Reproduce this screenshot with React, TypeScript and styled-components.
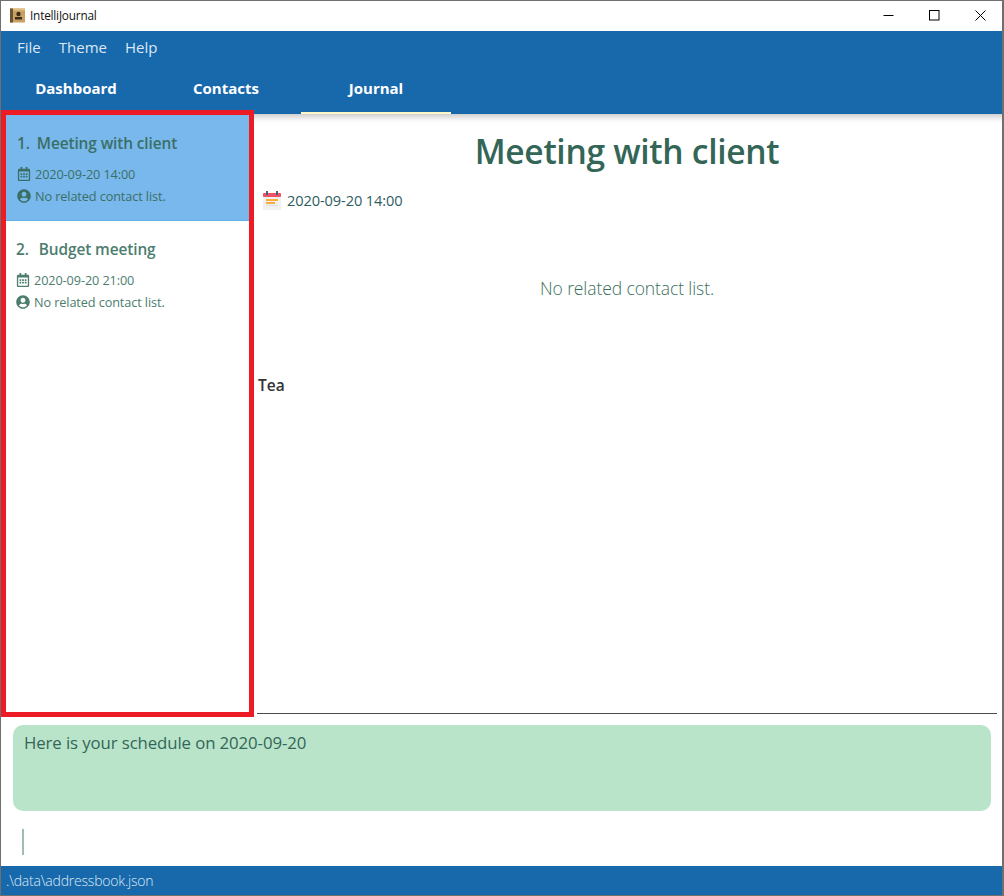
import React from "react";
import styled, {createGlobalStyle} from "styled-components";
import {FaRegCalendarAlt, FaUserCircle} from "react-icons/fa";

const colorBlue = "#1868ac";
const colorText = "#336657";
const fontStack = `"Open Sans", "Noto Sans", "Liberation Sans", sans-serif`;

const GlobalStyle = createGlobalStyle`
    html, body {
        margin: 0;
        padding: 0;
        background: #ffffff;
    }
    * {
        box-sizing: border-box;
    }
`

const Window = styled.div`
    position: relative;
    display: flex;
    flex-direction: column;
    width: 1004px;
    height: 896px;
    border: 1px solid #6f6f6f;
    border-right-width: 2px;
    font-family: ${fontStack};
    color: ${colorText};
    overflow: hidden;
`

const TitleBar = styled.div`
    display: flex;
    flex: none;
    height: 30px;
    align-items: center;
    padding: 0 0 2px 9px;
    background: #ffffff;
`

const AppTitle = styled.div`
    margin-left: 5px;
    font-size: 11.8px;
    letter-spacing: -0.2px;
    color: #111111;
`

const WindowControls = styled.div`
    display: flex;
    margin-left: auto;
    margin-right: -1px;
`

const WindowControl = styled.div`
    display: flex;
    width: 46px;
    height: 28px;
    align-items: center;
    justify-content: center;
`

const MenuBar = styled.div`
    display: flex;
    flex: none;
    height: 34px;
    gap: 18px;
    align-items: center;
    padding: 0 0 2px 16px;
    background: ${colorBlue};
    color: #dbe8f4;
    font-size: 15px;
`

const TabBar = styled.div`
    display: flex;
    flex: none;
    height: 49px;
    background: ${colorBlue};
`

type TabProps = {
    $active?: boolean,
    $width: number
}
const Tab = styled.div<TabProps>`
    display: flex;
    width: ${props => props.$width}px;
    height: 49px;
    align-items: center;
    justify-content: center;
    padding-bottom: 1px;
    border-bottom: 2px solid ${props => props.$active ? "#fdf6c8" : "transparent"};
    color: #ffffff;
    font-size: 15px;
    font-weight: 700;
`

const Body = styled.div`
    display: flex;
    flex: none;
    height: 602px;
    box-shadow: inset 0 8px 6px -5px rgba(0, 0, 0, 0.22);
`

const ListPanel = styled.div`
    flex: none;
    width: 253px;
    padding-top: 1px;
`

type ItemProps = {
    $selected?: boolean,
    $offset: number
}
const ListItem = styled.div<ItemProps>`
    height: 106px;
    padding: 17px 0 0 ${props => props.$offset}px;
    background: ${props => props.$selected ? "#79b8ec" : "#ffffff"};
    border-bottom: 1px solid ${props => props.$selected ? "#5eaeea" : "transparent"};
    color: ${props => props.$selected ? "#3a6f66" : "#4c7d6e"};
`

type ItemTitleProps = {
    $gap: number
}
const ItemTitle = styled.div<ItemTitleProps>`
    display: flex;
    gap: ${props => props.$gap}px;
    height: 22px;
    align-items: center;
    margin-bottom: 8px;
    font-size: 15.4px;
    font-weight: 600;
    letter-spacing: -0.1px;
`

const ItemRow = styled.div`
    display: flex;
    gap: 4px;
    height: 22px;
    align-items: center;
    padding-top: 2px;
    font-size: 12.7px;
    letter-spacing: -0.1px;
    svg {
        width: 14px;
        height: 14px;
    }
`

const DetailPanel = styled.div`
    display: flex;
    flex: 1;
    flex-direction: column;
    min-width: 0;
    padding: 0 5px 0 3px;
`

const Heading = styled.h1`
    margin: 13px 0 0;
    text-align: center;
    font-size: 33.6px;
    line-height: 48px;
    font-weight: 600;
    letter-spacing: -0.3px;
    color: #336657;
`

const DateRow = styled.div`
    display: flex;
    gap: 5px;
    height: 22px;
    align-items: center;
    margin: 14px 0 0 5px;
    font-size: 14.6px;
    letter-spacing: -0.1px;
    color: #2e5d5f;
`

const NoContacts = styled.div`
    margin-top: 64px;
    text-align: center;
    font-size: 17.5px;
    line-height: 26px;
    font-weight: 300;
    letter-spacing: -0.1px;
    color: #3a6f5c;
`

const Notes = styled.div`
    margin: 73px 0 0 1px;
    font-size: 15.5px;
    line-height: 22px;
    font-weight: 600;
    color: #333333;
`

const Divider = styled.div`
    height: 1px;
    margin-top: auto;
    margin-bottom: 2px;
    border-bottom: 1px solid #4a4a4a;
`

const ResultBox = styled.div`
    flex: none;
    height: 86px;
    margin: 9px 11px 0 12px;
    padding: 7px 11px;
    border-radius: 10px;
    background: #b9e4ca;
    color: #336657;
    font-size: 16.8px;
    line-height: 22px;
    letter-spacing: -0.1px;
`

const CommandRow = styled.div`
    display: flex;
    flex: none;
    height: 55px;
    padding: 18px 0 0 21px;
`

const Caret = styled.div`
    width: 2px;
    height: 26px;
    background: #9fbdb2;
`

const StatusBar = styled.div`
    display: flex;
    flex: 1;
    align-items: center;
    padding-left: 5px;
    background: ${colorBlue};
    color: #dbe8f4;
    font-size: 14px;
    font-weight: 300;
    letter-spacing: -0.2px;
`

// annotation drawn over the screenshot, it covers the tab bar edge and the list
const RedFrame = styled.div`
    position: absolute;
    left: 0;
    top: 109px;
    width: 253px;
    height: 607px;
    border: 5px solid #ed1c24;
    pointer-events: none;
`

function AppIcon() {
    return <svg width="15" height="15" viewBox="0 0 15 15">
        <rect x="0" y="0.5" width="15" height="14" fill="#c9a063"/>
        <rect x="0" y="0.5" width="3" height="14" fill="#6e5333"/>
        <rect x="3" y="0.5" width="12" height="2" fill="#e0bf85"/>
        <circle cx="8.5" cy="6" r="2.2" fill="#3d2c18"/>
        <rect x="5" y="9" width="7" height="2.5" fill="#3d2c18"/>
    </svg>
}

function CalendarIcon() {
    return <svg width="20" height="21" viewBox="0 0 20 21">
        <rect x="1" y="3" width="18" height="17" fill="#f1f1f1"/>
        <rect x="1" y="3" width="18" height="4" rx="1" fill="#ef5267"/>
        <rect x="4" y="1" width="2" height="4" fill="#46647c"/>
        <rect x="14" y="1" width="2" height="4" fill="#46647c"/>
        <rect x="4" y="9" width="12" height="2" fill="#fbab3f"/>
        <rect x="4" y="12" width="9" height="2" fill="#fbab3f"/>
        <rect x="4" y="15" width="12" height="1" fill="#dedede"/>
    </svg>
}

function MinimizeIcon() {
    return <svg width="11" height="11" viewBox="0 0 11 11">
        <path d="M0.5 5.5H10.5" stroke="#000000" fill="none"/>
    </svg>
}

function MaximizeIcon() {
    return <svg width="11" height="11" viewBox="0 0 11 11">
        <rect x="0.5" y="0.5" width="9.5" height="9.5" stroke="#000000" fill="none"/>
    </svg>
}

function CloseIcon() {
    return <svg width="11" height="11" viewBox="0 0 11 11">
        <path d="M0.5 0.5L10.5 10.5M10.5 0.5L0.5 10.5" stroke="#000000" fill="none"/>
    </svg>
}

const schedule = [
    {title: "Meeting with client", time: "2020-09-20 14:00", selected: true, offset: 16, gap: 7},
    {title: "Budget meeting", time: "2020-09-20 21:00", selected: false, offset: 15, gap: 10}
];

export default function App(): React.ReactElement {
    return <Window>
        <GlobalStyle/>
        <TitleBar>
            <AppIcon/>
            <AppTitle>IntelliJournal</AppTitle>
            <WindowControls>
                <WindowControl><MinimizeIcon/></WindowControl>
                <WindowControl><MaximizeIcon/></WindowControl>
                <WindowControl><CloseIcon/></WindowControl>
            </WindowControls>
        </TitleBar>
        <MenuBar>
            <span>File</span>
            <span>Theme</span>
            <span>Help</span>
        </MenuBar>
        <TabBar>
            <Tab $width={150}>Dashboard</Tab>
            <Tab $width={150}>Contacts</Tab>
            <Tab $width={150} $active>Journal</Tab>
        </TabBar>
        <Body>
            <ListPanel>
                {schedule.map((item, index) => <ListItem key={item.title} $selected={item.selected} $offset={item.offset}>
                    <ItemTitle $gap={item.gap}>
                        <span>{index + 1}.</span>
                        <span>{item.title}</span>
                    </ItemTitle>
                    <ItemRow><FaRegCalendarAlt/>{item.time}</ItemRow>
                    <ItemRow><FaUserCircle/>No related contact list.</ItemRow>
                </ListItem>)}
            </ListPanel>
            <DetailPanel>
                <Heading>Meeting with client</Heading>
                <DateRow><CalendarIcon/>2020-09-20 14:00</DateRow>
                <NoContacts>No related contact list.</NoContacts>
                <Notes>Tea</Notes>
                <Divider/>
            </DetailPanel>
        </Body>
        <ResultBox>Here is your schedule on 2020-09-20</ResultBox>
        <CommandRow><Caret/></CommandRow>
        <StatusBar>.\data\addressbook.json</StatusBar>
        <RedFrame/>
    </Window>
}
